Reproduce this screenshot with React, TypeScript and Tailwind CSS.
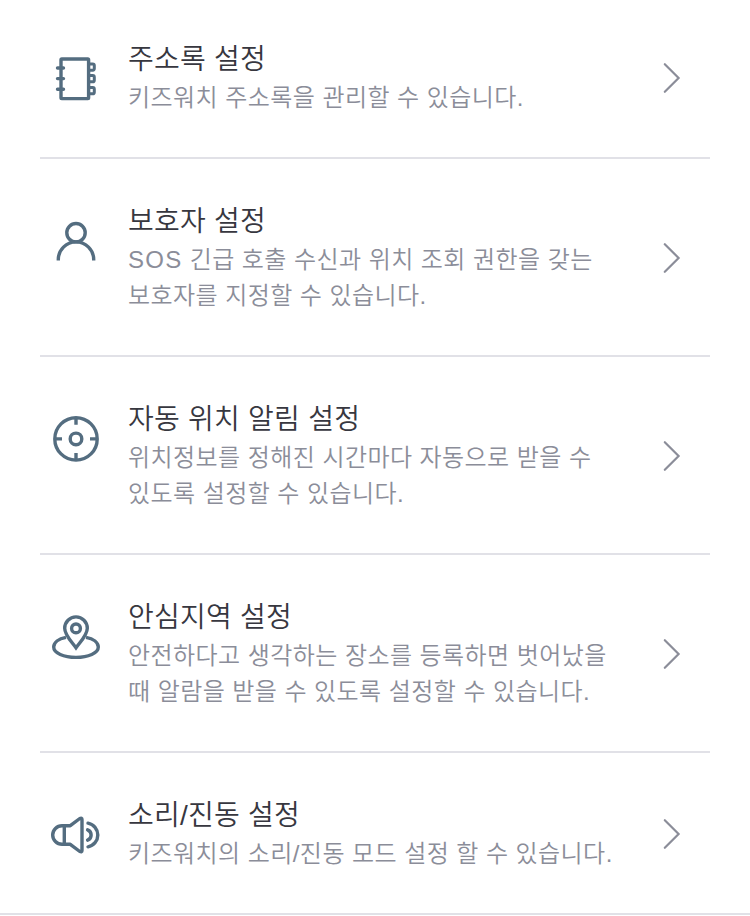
import type { ReactNode } from 'react';
import { clsx } from 'clsx';

type Setting = {
  title: string;
  lines: ReactNode[];
  icon: ReactNode;
};

const settings: Setting[] = [
  {
    title: '주소록 설정',
    lines: ['키즈워치 주소록을 관리할 수 있습니다.'],
    icon: (
      <>
        <rect x="13" y="8" width="27.6" height="39.6" rx="0.8" />
        <path strokeLinecap="round" d="M9.5 17h6M9.5 27.6h6M9.5 38.2h6" />
        <path
          strokeWidth="3"
          d="M40.5 13h4.2q1.6 0 1.6 1.6v3q0 1.6-1.6 1.6h-4.2M40.5 24.6h4.2q1.6 0 1.6 1.6v3q0 1.6-1.6 1.6h-4.2M40.5 36.6h4.2q1.6 0 1.6 1.6v3q0 1.6-1.6 1.6h-4.2"
        />
      </>
    ),
  },
  {
    title: '보호자 설정',
    lines: [
      <>
        <span className="tracking-[1.3px]">SOS</span> 긴급 호출 수신과 위치 조회 권한을 갖는
      </>,
      '보호자를 지정할 수 있습니다.',
    ],
    icon: (
      <>
        <circle cx="28" cy="19.7" r="9.2" />
        <path d="M10.3 47.4v-.8a17.7 17.7 0 0 1 35.4 0v.8" />
      </>
    ),
  },
  {
    title: '자동 위치 알림 설정',
    lines: ['위치정보를 정해진 시간마다 자동으로 받을 수', '있도록 설정할 수 있습니다.'],
    icon: (
      <>
        <circle cx="28" cy="27.9" r="21.2" />
        <circle cx="28" cy="27.9" r="5.8" />
        <path d="M28 7v6.8M28 42v6.8M7 27.9h7M42 27.9h7" />
      </>
    ),
  },
  {
    title: '안심지역 설정',
    lines: ['안전하다고 생각하는 장소를 등록하면 벗어났을', '때 알람을 받을 수 있도록 설정할 수 있습니다.'],
    icon: (
      <>
        <path d="M28 38.8C24 33 16.7 26.3 16.7 19.2a11.3 11.3 0 0 1 22.6 0C39.3 26.3 32 33 28 38.8z" />
        <circle cx="28" cy="19.4" r="4.4" />
        <path d="M18 28.3C10.5 29.8 5.7 33.5 5.7 38c0 6 10 10.4 22.3 10.4S50.3 44 50.3 38c0-4.5-4.8-8.2-12.3-9.7" />
      </>
    ),
  },
  {
    title: '소리/진동 설정',
    lines: ['키즈워치의 소리/진동 모드 설정 할 수 있습니다.'],
    icon: (
      <>
        <path
          strokeLinejoin="round"
          d="M22.3 18.7H14a9.3 9.3 0 0 0 0 18.6h8.3l9.5 7.2q2.2 1 2.2-1V12.5q0-2-2.2-1zM16.3 18.7v18.6"
        />
        <path strokeLinecap="round" d="M40 16.2a12 12 0 0 1 0 23.6M39.6 22.8a5.6 5.6 0 0 1 0 10.4" />
      </>
    ),
  },
];

function SettingRow({ title, lines, icon, last }: Setting & { last: boolean }) {
  return (
    <li className={clsx('flex py-[41px] pl-2', !last && 'border-b-2 border-[#e1e1e7]')}>
      <svg
        viewBox="0 0 56 56"
        className="mt-[13px] size-14 shrink-0"
        fill="none"
        stroke="#546d80"
        strokeWidth="3.4"
        aria-hidden="true"
      >
        {icon}
      </svg>
      <div className="ml-6 flex-1 whitespace-nowrap">
        <h2 className="pt-0.5 text-[28px] leading-10 tracking-[0.25px] text-[#37373f]">{title}</h2>
        <p className="text-[24px] leading-9 tracking-[0.44px] text-[#8b8d99]">
          {lines.map((line, i) => (
            <span key={i} className="block">
              {line}
            </span>
          ))}
        </p>
      </div>
      <svg
        viewBox="0 0 20 32"
        className="mt-0.5 mr-7 h-8 w-5 shrink-0 self-center"
        fill="none"
        stroke="#8b8d99"
        strokeWidth="2.2"
        strokeLinecap="round"
        aria-hidden="true"
      >
        <path d="M2.8 2.2L16.6 16 2.8 29.8" />
      </svg>
    </li>
  );
}

export default function App() {
  return (
    <main className="h-[916px] overflow-hidden bg-white font-['Liberation_Sans','Noto_Sans_CJK_KR',sans-serif] font-[350]">
      <ul className="-mt-[3px] border-b-2 border-[#e1e1e7] px-10">
        {settings.map((setting, i) => (
          <SettingRow key={setting.title} {...setting} last={i === settings.length - 1} />
        ))}
      </ul>
    </main>
  );
}
